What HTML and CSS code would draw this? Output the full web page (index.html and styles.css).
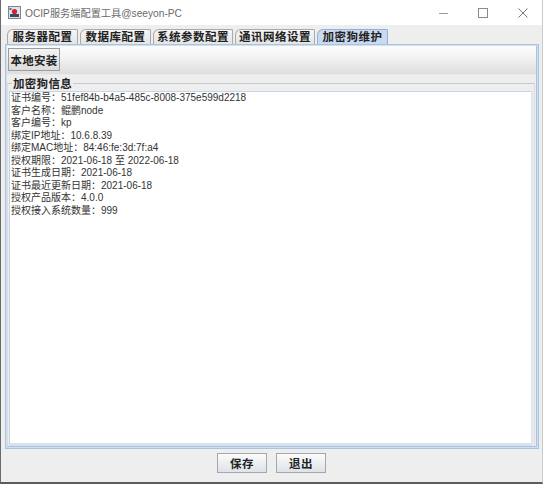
FILE: index.html
```html
<!DOCTYPE html>
<html>
<head>
<meta charset="utf-8">
<link rel="stylesheet" href="styles.css">
</head>
<body>
<div class="window">
  <div class="titlebar">
    <svg class="appicon" width="13" height="13" viewBox="0 0 13 13">
      <rect x="0.5" y="0.5" width="12" height="12" fill="#dfe3ea" stroke="#7b8594"/>
      <rect x="2" y="8" width="9" height="3" fill="#3a4a66"/>
      <circle cx="6.5" cy="5.5" r="2.6" fill="#d2232a"/>
      <rect x="1.5" y="2" width="2" height="2" fill="#5a6b8a"/>
    </svg>
    <span class="title">OCIP服务端配置工具@seeyon-PC</span>
    <div class="controls">
      <span class="ctl min"></span>
      <span class="ctl max"></span>
      <svg class="ctl close" width="10" height="10" viewBox="0 0 10 10"><path d="M0.5 0.5L9.5 9.5M9.5 0.5L0.5 9.5" stroke="#777" stroke-width="1"/></svg>
    </div>
  </div>
  <div class="tabs">
    <div class="tab">服务器配置</div>
    <div class="tab">数据库配置</div>
    <div class="tab w3">系统参数配置</div>
    <div class="tab w3">通讯网络设置</div>
    <div class="tab active">加密狗维护</div>
  </div>
  <div class="panel">
    <div class="toolbar">
      <button class="btn tbtn">本地安装</button>
    </div>
    <div class="group">
      <div class="legend">加密狗信息</div>
      <div class="textarea">
        <div class="line"><span>证书编号：51fef84b-b4a5-485c-8008-375e599d2218</span></div>
        <div class="line"><span>客户名称：鲲鹏node</span></div>
        <div class="line"><span>客户编号：kp</span></div>
        <div class="line"><span>绑定IP地址：10.6.8.39</span></div>
        <div class="line"><span>绑定MAC地址：84:46:fe:3d:7f:a4</span></div>
        <div class="line"><span>授权期限：2021-06-18 至 2022-06-18</span></div>
        <div class="line"><span>证书生成日期：2021-06-18</span></div>
        <div class="line"><span>证书最近更新日期：2021-06-18</span></div>
        <div class="line"><span>授权产品版本：4.0.0</span></div>
        <div class="line"><span>授权接入系统数量：999</span></div>
      </div>
    </div>
  </div>
  <div class="footer">
    <button class="btn fbtn">保存</button>
    <button class="btn fbtn">退出</button>
  </div>
</div>
</body>
</html>
```
FILE: styles.css
```css
* { box-sizing: border-box; }
html, body { margin: 0; padding: 0; }
body {
  width: 543px;
  height: 484px;
  overflow: hidden;
  background: #eeeeee;
  font-family: "Noto Sans CJK SC", "DejaVu Sans", sans-serif;
}
.window {
  width: 543px;
  height: 484px;
  border-left: 1px solid #6b6b6b;
  border-bottom: 2px solid #5c5c5c;
  border-right: 1px solid #c9c9c9;
  background: #eeeeee;
  display: flex;
  flex-direction: column;
}
.titlebar {
  height: 25px;
  background: #ffffff;
  display: flex;
  align-items: center;
  padding-left: 7px;
  flex: none;
}
.appicon { flex: none; }
.title {
  margin-left: 4px;
  font-family: "Liberation Sans", "Noto Sans CJK SC", sans-serif;
  font-size: 10.2px;
  color: #6a6a6a;
}
.controls {
  margin-left: auto;
  display: flex;
  align-items: center;
  height: 25px;
}
.ctl { display: block; }
.min {
  width: 9px;
  height: 1px;
  background: #9a9a9a;
  margin-right: 30px;
  margin-top: 2px;
}
.max {
  width: 10px;
  height: 10px;
  border: 1px solid #8a8a8a;
  margin-right: 30px;
}
.close { margin-right: 14px; }
.tabs {
  display: flex;
  gap: 2px;
  padding-left: 6px;
  margin-top: 4px;
  height: 15px;
  flex: none;
}
.tab {
  width: 71px;
  height: 15px;
  border: 1px solid #a9a9a9;
  border-bottom: none;
  border-radius: 6px 2px 0 0;
  background: linear-gradient(#f6f6f6, #e4e4e4);
  font-size: 11.5px;
  font-weight: bold;
  color: #222;
  line-height: 13px;
  text-align: center;
  letter-spacing: 0.5px;
}
.tab.w3 { width: 80px; }
.tab.active {
  width: 71px;
  background: #c9daf0;
  border-color: #8fb0d8;
  color: #222;
}
.panel {
  margin: 0 3px 0 4px;
  height: 405px;
  border: 1px solid #a9c3e2;
  border-right-width: 3px;
  border-bottom-width: 3px;
  background: #eeeeee;
  display: flex;
  flex-direction: column;
  flex: none;
  outline: 1px solid #d4dfee;
  outline-offset: -2px;
}
.toolbar {
  height: 30px;
  padding: 3px 2px;
  background: linear-gradient(#fdfdfd 0%, #f2f2f2 45%, #dedede 100%);
  border-bottom: 1px solid #e6ebf0;
  flex: none;
  display: flex;
  align-items: center;
}
.btn {
  font-family: "Noto Sans CJK SC", sans-serif;
  font-weight: bold;
  font-size: 11.5px;
  color: #222;
  padding: 0;
  margin: 0;
  border: 1px solid #9c9c9c;
  border-radius: 0;
  background: linear-gradient(#f4f4f4, #dddddd);
  line-height: 18px;
}
.tbtn {
  width: 52px;
  height: 23px;
  letter-spacing: 0.3px;
}
.group {
  position: relative;
  margin: 8px 1px 0 1px;
  border: 1px solid #dcdcdc;
  border-top: 1px solid #c8c8c8;
  border-bottom: none;
  flex: 1;
  display: flex;
  flex-direction: column;
  padding: 7px 1px 0 1px;
}
.legend {
  position: absolute;
  top: -8px;
  left: 4px;
  padding: 0 1px;
  background: #eeeeee;
  font-size: 11.5px;
  font-weight: bold;
  line-height: 14px;
  color: #222;
  letter-spacing: 0.3px;
}
.textarea {
  flex: 1;
  background: #ffffff;
  border: 1px solid #c5d6ea;
  border-bottom: 3px solid #d5e2f0;
  border-right: 2px solid #dde7f3;
  padding: 0 0 0 1px;
  font-family: "Liberation Sans", "Noto Sans CJK SC", sans-serif;
  font-size: 10px;
  color: #333;
}
.line {
  height: 12.5px;
  line-height: 12.5px;
}
.line span {
  display: inline-block;
  height: 12.5px;
  line-height: 12.5px;
  white-space: nowrap;
}
.footer {
  flex: 1;
  display: flex;
  justify-content: center;
  gap: 9px;
  padding-top: 4px;
}
.fbtn {
  width: 50px;
  height: 20px;
  line-height: 16px;
  border: 1px solid #a7a7a7;
  background: linear-gradient(#fbfbfb, #dde3ea);
  letter-spacing: 0.5px;
}
```
